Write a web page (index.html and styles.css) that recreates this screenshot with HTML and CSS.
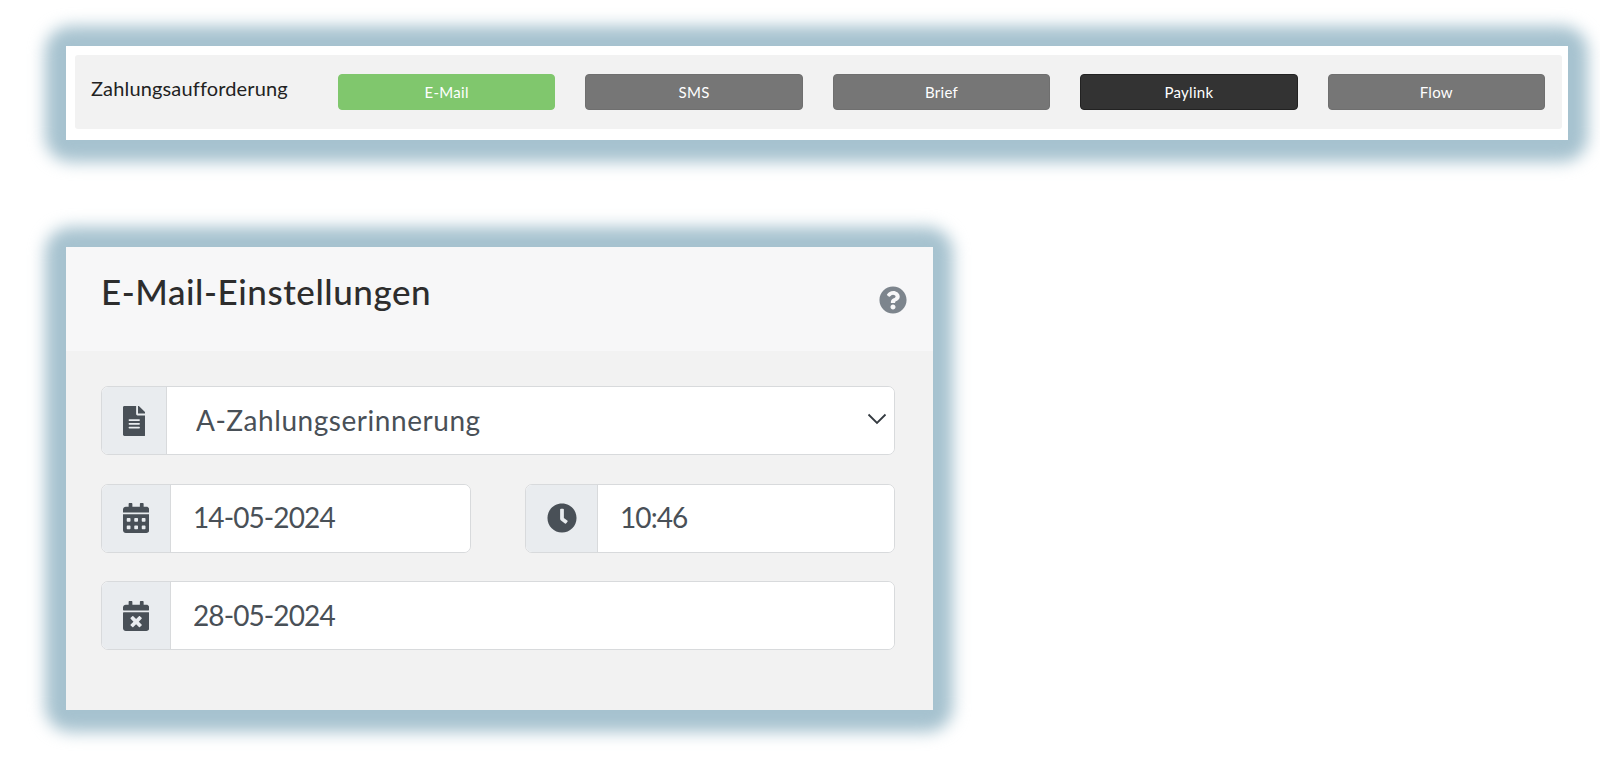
FILE: index.html
```html
<!DOCTYPE html>
<html lang="de">
<head>
  <meta charset="UTF-8" />
  <meta name="viewport" content="width=device-width, initial-scale=1" />
  <title>E-Mail-Einstellungen</title>
  <link rel="stylesheet" href="styles.css">
</head>
<body>
  <section class="panel panel-top">
    <div class="channel-bar">
      <div class="channel-label">Zahlungsaufforderung</div>
      <div class="channel-buttons">
        <button class="btn btn-green">E-Mail</button>
        <button class="btn">SMS</button>
        <button class="btn">Brief</button>
        <button class="btn btn-dark">Paylink</button>
        <button class="btn">Flow</button>
      </div>
    </div>
  </section>

  <section class="panel panel-settings">
    <header class="settings-head">
      <h2>E-Mail-Einstellungen</h2>
      <svg class="help-icon" viewBox="0 0 512 512"><path d="M504 256c0 136.997-111.043 248-248 248S8 392.997 8 256C8 119.083 119.043 8 256 8s248 111.083 248 248zM262.655 90c-54.497 0-89.255 22.957-116.549 63.758-3.536 5.286-2.353 12.415 2.715 16.258l34.699 26.31c5.205 3.947 12.621 3.008 16.665-2.122 17.864-22.658 30.113-35.797 57.303-35.797 20.429 0 45.698 13.148 45.698 32.958 0 14.976-12.363 22.667-32.534 33.976C247.128 238.528 216 254.941 216 296v4c0 6.627 5.373 12 12 12h56c6.627 0 12-5.373 12-12v-1.333c0-28.462 83.186-29.647 83.186-106.667 0-58.002-60.165-101.917-116.531-101.917zM256 338c-25.365 0-46 20.635-46 46 0 25.364 20.635 46 46 46s46-20.636 46-46c0-25.365-20.635-46-46-46z"/></svg>
    </header>
    <div class="settings-body">
      <div class="field">
        <span class="addon addon-select">
          <svg class="icon" viewBox="0 0 384 512"><path d="M224 136V0H24C10.7 0 0 10.7 0 24v464c0 13.3 10.7 24 24 24h336c13.3 0 24-10.7 24-24V160H248c-13.2 0-24-10.8-24-24zm64 236c0 6.6-5.4 12-12 12H108c-6.6 0-12-5.4-12-12v-8c0-6.6 5.4-12 12-12h168c6.6 0 12 5.4 12 12v8zm0-64c0 6.6-5.4 12-12 12H108c-6.6 0-12-5.4-12-12v-8c0-6.6 5.4-12 12-12h168c6.6 0 12 5.4 12 12v8zm0-72v8c0 6.6-5.4 12-12 12H108c-6.6 0-12-5.4-12-12v-8c0-6.6 5.4-12 12-12h168c6.6 0 12 5.4 12 12zm96-114.1v6.1H256V0h6.1c6.4 0 12.5 2.5 17 7l97.9 98c4.5 4.5 7 10.6 7 16.9z"/></svg>
        </span>
        <select class="control control-select">
          <option>A-Zahlungserinnerung</option>
        </select>
        <svg class="chevron" viewBox="0 0 20 12"><path d="M1.5 1.5 10 10l8.5-8.5"/></svg>
      </div>

      <div class="field-row">
        <div class="field">
          <span class="addon addon-date">
            <svg class="icon" viewBox="0 0 448 512"><path d="M0 464c0 26.5 21.5 48 48 48h352c26.5 0 48-21.5 48-48V192H0v272zm320-196c0-6.6 5.4-12 12-12h40c6.6 0 12 5.4 12 12v40c0 6.6-5.4 12-12 12h-40c-6.6 0-12-5.4-12-12v-40zm0 128c0-6.6 5.4-12 12-12h40c6.6 0 12 5.4 12 12v40c0 6.6-5.4 12-12 12h-40c-6.6 0-12-5.4-12-12v-40zM192 268c0-6.6 5.4-12 12-12h40c6.6 0 12 5.4 12 12v40c0 6.6-5.4 12-12 12h-40c-6.6 0-12-5.4-12-12v-40zm0 128c0-6.6 5.4-12 12-12h40c6.6 0 12 5.4 12 12v40c0 6.6-5.4 12-12 12h-40c-6.6 0-12-5.4-12-12v-40zM64 268c0-6.6 5.4-12 12-12h40c6.6 0 12 5.4 12 12v40c0 6.6-5.4 12-12 12H76c-6.6 0-12-5.4-12-12v-40zm0 128c0-6.6 5.4-12 12-12h40c6.6 0 12 5.4 12 12v40c0 6.6-5.4 12-12 12H76c-6.6 0-12-5.4-12-12v-40zM400 64h-48V16c0-8.8-7.2-16-16-16h-32c-8.8 0-16 7.2-16 16v48H160V16c0-8.8-7.2-16-16-16h-32c-8.8 0-16 7.2-16 16v48H48C21.5 64 0 85.5 0 112v48h448v-48c0-26.5-21.5-48-48-48z"/></svg>
          </span>
          <input class="control control-date" type="text" value="14-05-2024" />
        </div>
        <div class="field">
          <span class="addon addon-time">
            <svg class="icon" viewBox="0 0 512 512"><path d="M256,8C119,8,8,119,8,256S119,504,256,504,504,393,504,256,393,8,256,8Zm92.49,313h0l-20,25a16,16,0,0,1-22.49,2.5h0l-67-49.72a40,40,0,0,1-15-31.23V112a16,16,0,0,1,16-16h32a16,16,0,0,1,16,16V256l58,42.5A16,16,0,0,1,348.49,321Z"/></svg>
          </span>
          <input class="control control-date" type="text" value="10:46" />
        </div>
      </div>

      <div class="field">
        <span class="addon addon-date">
          <svg class="icon" viewBox="0 0 448 512"><path d="M436 160H12c-6.6 0-12-5.4-12-12v-36c0-26.5 21.5-48 48-48h48V12c0-6.6 5.4-12 12-12h40c6.6 0 12 5.4 12 12v52h128V12c0-6.6 5.4-12 12-12h40c6.6 0 12 5.4 12 12v52h48c26.5 0 48 21.5 48 48v36c0 6.6-5.4 12-12 12zM12 192h424c6.6 0 12 5.4 12 12v260c0 26.5-21.5 48-48 48H48c-26.5 0-48-21.5-48-48V204c0-6.6 5.4-12 12-12zm257.3 160l48.1-48.1c4.7-4.7 4.7-12.3 0-17l-28.3-28.3c-4.7-4.7-12.3-4.7-17 0L224 306.7l-48.1-48.1c-4.7-4.7-12.3-4.7-17 0l-28.3 28.3c-4.7 4.7-4.7 12.3 0 17l48.1 48.1-48.1 48.1c-4.7 4.7-4.7 12.3 0 17l28.3 28.3c4.7 4.7 12.3 4.7 17 0l48.1-48.1 48.1 48.1c4.7 4.7 12.3 4.7 17 0l28.3-28.3c4.7-4.7 4.7-12.3 0-17L269.3 352z"/></svg>
        </span>
        <input class="control control-date" type="text" value="28-05-2024" />
      </div>
    </div>
  </section>
</body>
</html>
```

FILE: styles.css
```css
html, body { margin: 0; height: 100%; overflow: hidden; }
body { background: white; font-family: 'Lato', 'Liberation Sans', sans-serif; padding: 46px 0 0 66px; box-sizing: border-box; }

/* blue glow behind both panels */
.panel { position: relative; isolation: isolate; }
.panel::before { content: ''; position: absolute; inset: -20px -20px -22px -21px; z-index: -1; background: #a6c2cf; border-radius: 26px; filter: blur(8px); }

/* top panel */
.panel-top { width: 1502px; height: 94px; box-sizing: border-box; padding: 9px 6px 11px 9px; }
.panel-top::after { content: ''; position: absolute; inset: 0; z-index: -1; background: white; }
.channel-bar { display: flex; align-items: center; height: 100%; box-sizing: border-box; padding: 0 17px 0 16px; background: #f2f2f2; border-radius: 3px; }
.channel-label { flex: 0 0 247px; font-size: 20px; letter-spacing: 0.15px; color: #222; margin-top: -9px; }
.channel-buttons { flex: 1; display: flex; gap: 30px; margin-top: 0; }
.btn { flex: 1; height: 36px; border: 1px solid #6f6f6f; border-radius: 4px; background: #767676; color: white; font-family: inherit; font-size: 15px; letter-spacing: 0.3px; padding: 0 0 1px; }
.btn-green { background: #80c76d; border-color: #80c76d; }
.btn-dark { background: #333; border-color: #222; }

/* settings panel */
.panel-settings { width: 867px; margin-top: 107px; }
.panel-settings::after { content: ''; position: absolute; inset: 0; z-index: -1; background: #f2f2f2; }
.settings-head { display: flex; justify-content: space-between; height: 104px; box-sizing: border-box; padding: 23px 26px 0 35px; background: #f7f7f8; }
.settings-head h2 { margin: 0; font-size: 35px; font-weight: 500; letter-spacing: 0.55px; color: #2d2d2d; }
.help-icon { width: 28px; height: 28px; margin-top: 16px; fill: #7d858d; }
.settings-body { display: flex; flex-direction: column; gap: 28.5px; padding: 35px 38px 60px 35px; }
.field-row { display: flex; gap: 54px; }
.field-row .field { flex: 1; }
.field { position: relative; display: flex; height: 69px; box-sizing: border-box; border: 1px solid #d8dadc; border-radius: 7px; background: white; overflow: hidden; }
.addon { flex: none; display: flex; align-items: center; justify-content: center; background: #e9ecef; border-right: 1px solid #d8dadc; box-sizing: border-box; }
.addon-select { width: 65px; }
.addon-date { width: 69px; }
.addon-time { width: 72px; }
.icon { height: 30px; width: auto; fill: #495057; display: block; }
.control { flex: 1; min-width: 0; border: none; outline: none; background: white; color: #495057; font-family: inherit; font-size: 28px; padding: 0 22px 2px; }
.control-date { letter-spacing: -0.9px; }
.control-select { appearance: none; -webkit-appearance: none; padding: 0 29px 2px; letter-spacing: 0.55px; }
.chevron { position: absolute; right: 7px; top: 26px; width: 20px; height: 12px; fill: none; stroke: #343a40; stroke-width: 1.8; }
```
